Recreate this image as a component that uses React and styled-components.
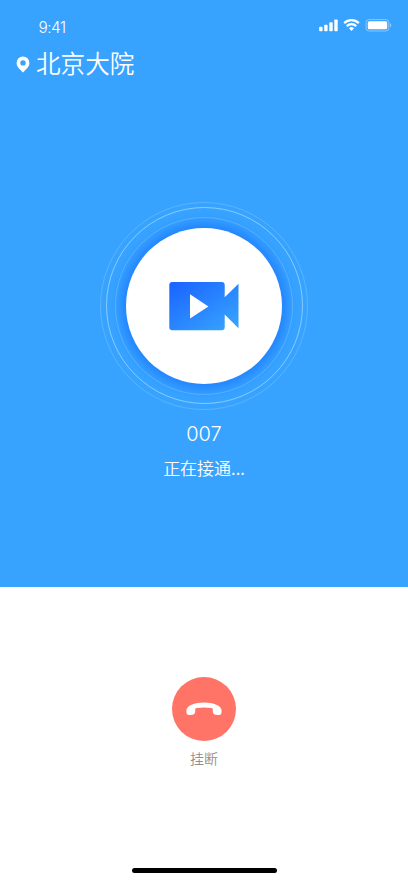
import React from "react";
import styled, { createGlobalStyle } from "styled-components";

const GlobalStyle = createGlobalStyle`
  * {
    box-sizing: border-box;
  }

  body {
    margin: 0;
    background: #fff;
    font-family: Inter, "Noto Sans CJK SC", sans-serif;
  }
`;

const Screen = styled.div`
  display: flex;
  flex-direction: column;
  height: 883px;
  overflow: hidden;
`;

const CallPanel = styled.main`
  display: flex;
  flex-direction: column;
  height: 587px;
  background: #38a3ff;
  color: #fff;
`;

const StatusBar = styled.header`
  display: flex;
  justify-content: space-between;
  height: 43px;
  padding: 18px 16px 0 38.5px;
`;

const Time = styled.span`
  font-size: 15.3px;
  font-weight: 300;
  line-height: 20px;
  letter-spacing: -0.5px;
`;

const StatusIcons = styled.svg`
  width: 73px;
  height: 14px;
`;

const Location = styled.div`
  display: flex;
  align-items: center;
  height: 38px;
  padding-left: 16px;
  gap: 6px;
`;

const PinIcon = styled.svg`
  width: 14px;
  height: 17px;
  margin-top: 4px;
`;

const Place = styled.h1`
  margin: 0;
  font-family: "Noto Sans CJK SC", sans-serif;
  font-size: 24.6px;
  font-weight: 350;
  line-height: 38px;
`;

const Ring = styled.div`
  display: flex;
  align-items: center;
  justify-content: center;
  flex-shrink: 0;
  width: ${({ $size }) => $size}px;
  height: ${({ $size }) => $size}px;
  border: 1px solid rgba(160, 218, 255, ${({ $opacity }) => $opacity});
  border-radius: 50%;
`;

const OuterRing = styled(Ring)`
  margin: 120.5px auto 0;
`;

const Avatar = styled.div`
  display: flex;
  align-items: center;
  justify-content: center;
  flex-shrink: 0;
  width: 156px;
  height: 156px;
  border-radius: 50%;
  background: #fff;
  box-shadow: 0 0 12px 5px #2080ff;
`;

const VideoIcon = styled.svg`
  width: 70px;
  height: 50px;
`;

const Caller = styled.div`
  margin-top: 11px;
  font-size: 20px;
  font-weight: 300;
  line-height: 26px;
  text-align: center;
`;

const CallStatus = styled.div`
  margin-top: 8px;
  font-family: "Noto Sans CJK SC", sans-serif;
  font-size: 17px;
  font-weight: 350;
  line-height: 26px;
  text-align: center;
`;

const Controls = styled.footer`
  display: flex;
  flex: 1;
  flex-direction: column;
  align-items: center;
  padding: 90px 0 10px;
`;

const HangUpButton = styled.button`
  display: flex;
  align-items: center;
  justify-content: center;
  width: 64px;
  height: 64px;
  padding: 0;
  border: 0;
  border-radius: 50%;
  background: #ff7466;
`;

const PhoneIcon = styled.svg`
  width: 36px;
  height: 14px;
`;

const HangUpLabel = styled.span`
  margin-top: 7px;
  color: #8f8f8f;
  font-family: "Noto Sans CJK SC", sans-serif;
  font-size: 14px;
  font-weight: 350;
  line-height: 20px;
`;

const HomeIndicator = styled.div`
  width: 145px;
  height: 5px;
  margin-top: auto;
  border-radius: 3px;
  background: #000;
`;

const App = () => {
  return (
    <>
      <GlobalStyle />
      <Screen>
        <CallPanel>
          <StatusBar>
            <Time>9:41</Time>
            <StatusIcons viewBox="0 0 73 14" fill="#fff">
              <rect x="0.2" y="8.8" width="3.4" height="4.4" rx="0.8" />
              <rect x="5.2" y="6.8" width="3.4" height="6.4" rx="0.8" />
              <rect x="10.3" y="4.3" width="3.4" height="8.9" rx="0.8" />
              <rect x="15.3" y="1.5" width="3.4" height="11.7" rx="0.8" />
              <g fill="none" stroke="#fff" strokeWidth="2.2">
                <path d="M25.2 5.1A10.6 10.6 0 0 1 39.8 5.1" />
                <path d="M27.8 8.1A6.7 6.7 0 0 1 37.2 8.1" />
              </g>
              <path d="M30 10.2A3.6 3.6 0 0 1 35 10.2L32.5 12.9Z" />
              <rect x="47.1" y="1.6" width="22.8" height="11.4" rx="3" fill="none" stroke="#fff" strokeOpacity="0.4" />
              <rect x="48.8" y="3.3" width="19.4" height="8" rx="1.5" />
              <path d="M71 5.2C72.7 5.8 72.7 8.6 71 9.2Z" opacity="0.45" />
            </StatusIcons>
          </StatusBar>
          <Location>
            <PinIcon viewBox="0 0 14 17">
              <path
                fill="#fff"
                fillRule="evenodd"
                d="M7 0.5A6.4 6.4 0 0 0 0.6 6.9C0.6 10.7 4.2 13.5 7 16.4C9.8 13.5 13.4 10.7 13.4 6.9A6.4 6.4 0 0 0 7 0.5ZM7 4.2A2.7 2.7 0 1 1 7 9.6A2.7 2.7 0 0 1 7 4.2Z"
              />
            </PinIcon>
            <Place>北京大院</Place>
          </Location>
          <OuterRing $size={208} $opacity={0.3}>
            <Ring $size={197} $opacity={0.75}>
              <Ring $size={178} $opacity={0.4}>
                <Avatar>
                  <VideoIcon viewBox="0 0 70 50">
                    <defs>
                      <linearGradient id="video" x1="10" y1="0" x2="45" y2="55" gradientUnits="userSpaceOnUse">
                        <stop offset="0" stopColor="#1b66ff" />
                        <stop offset="1" stopColor="#35a0ff" />
                      </linearGradient>
                    </defs>
                    <path
                      fill="url(#video)"
                      fillRule="evenodd"
                      d="M3.3 0.9H52.7Q55.7 0.9 55.7 3.9V16.2L69.5 2.8V47.2L55.7 33.4V46.3Q55.7 49.3 52.7 49.3H3.3Q0.3 49.3 0.3 46.3V3.9Q0.3 0.9 3.3 0.9ZM21 13.2V37.6L39.4 25.4Z"
                    />
                  </VideoIcon>
                </Avatar>
              </Ring>
            </Ring>
          </OuterRing>
          <Caller>007</Caller>
          <CallStatus>正在接通...</CallStatus>
        </CallPanel>
        <Controls>
          <HangUpButton aria-label="挂断">
            <PhoneIcon viewBox="0 0 36 14">
              <path
                fill="#fff"
                d="M0.4 8.6C0.6 3.6 8.5 0.6 18 0.6S35.4 3.6 35.6 8.6V10.6Q35.4 13.2 32.8 13.1L29.4 12.7Q26.8 12.2 26.8 9.8V7.4Q26.8 6.3 25.4 6Q18 4.8 10.6 6Q9.2 6.3 9.2 7.4V9.8Q9.2 12.2 6.6 12.7L3.2 13.1Q0.6 13.2 0.4 10.6Z"
              />
            </PhoneIcon>
          </HangUpButton>
          <HangUpLabel>挂断</HangUpLabel>
          <HomeIndicator />
        </Controls>
      </Screen>
    </>
  );
};

export default App;
